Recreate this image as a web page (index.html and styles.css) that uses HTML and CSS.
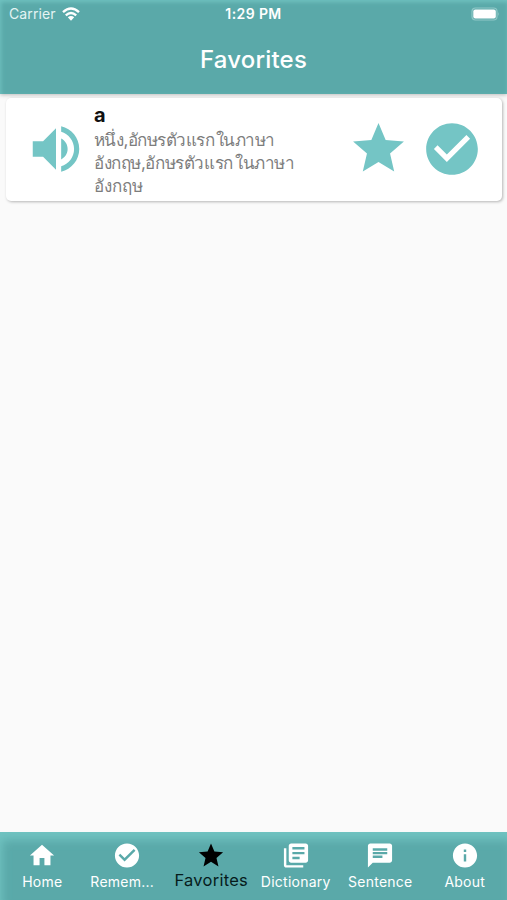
FILE: index.html
```html
<!DOCTYPE html>
<html lang="en">
<head>
  <meta charset="utf-8">
  <title>Favorites</title>
  <link rel="stylesheet" href="styles.css">
</head>
<body>
  <header class="header">
    <div class="status">
      <div class="carrier">
        <span>Carrier</span>
        <svg class="wifi" viewBox="0 0 18 14">
          <path d="M1 5.2Q9-2 17 5.2M3.8 8.3Q9 3.7 14.2 8.3" fill="none" stroke="#fff" stroke-width="2.4"/>
          <path d="M5.8 10.3Q9 7.6 12.2 10.3L9 13.7z" fill="#fff"/>
        </svg>
      </div>
      <span class="time">1:29 PM</span>
      <svg class="battery" viewBox="0 0 30 14">
        <rect x="1" y="1" width="25" height="12" rx="3.5" fill="none" stroke="#8fc8c7" stroke-width="1.2"/>
        <rect x="2.3" y="2.5" width="22.5" height="9" rx="2" fill="#fff"/>
        <path d="M27.3 5v4q1.7-2 0-4z" fill="#8fc8c7"/>
      </svg>
    </div>
    <h1 class="title">Favorites</h1>
  </header>

  <main class="content">
    <div class="card">
      <svg class="sound" viewBox="0 0 24 24"><path d="M3 9v6h4l5 5V4L7 9H3zm13.5 3c0-1.77-1.02-3.29-2.5-4.03v8.05c1.48-.73 2.5-2.25 2.5-4.02zM14 3.23v2.06c2.89.86 5 3.54 5 6.71s-2.11 5.85-5 6.71v2.06c4.01-.91 7-4.49 7-8.77s-2.99-7.86-7-8.77z"/></svg>
      <div class="word">
        <h2>a</h2>
        <p lang="th"><span class="first">หนึ่ง,อักษรตัวแรก<span class="gap">ในภาษา</span></span><br><span class="second">อังกฤษ,อักษรตัวแรก<span class="gap">ในภาษา</span></span><br><span>อังกฤษ</span></p>
      </div>
      <svg class="star" viewBox="0 0 24 24"><path d="M12 17.27L18.18 21l-1.64-7.03L22 9.24l-7.19-.61L12 2 9.19 8.63 2 9.24l5.46 4.73L5.82 21z"/></svg>
      <svg class="check" viewBox="0 0 24 24"><path d="M12 2C6.48 2 2 6.48 2 12s4.48 10 10 10 10-4.48 10-10S17.52 2 12 2zm-2 15l-5-5 1.41-1.41L10 14.17l7.59-7.59L19 8l-9 9z"/></svg>
    </div>
  </main>

  <nav class="tabs">
    <div class="tab">
      <svg viewBox="0 0 24 24"><path d="M10 20v-6h4v6h5v-8h3L12 3 2 12h3v8z"/></svg>
      <span>Home</span>
    </div>
    <div class="tab">
      <svg viewBox="0 0 24 24"><path d="M12 2C6.48 2 2 6.48 2 12s4.48 10 10 10 10-4.48 10-10S17.52 2 12 2zm-2 15l-5-5 1.41-1.41L10 14.17l7.59-7.59L19 8l-9 9z"/></svg>
      <span class="cut">Remem...</span>
    </div>
    <div class="tab active">
      <svg viewBox="0 0 24 24"><path d="M12 17.27L18.18 21l-1.64-7.03L22 9.24l-7.19-.61L12 2 9.19 8.63 2 9.24l5.46 4.73L5.82 21z"/></svg>
      <span>Favorites</span>
    </div>
    <div class="tab">
      <svg viewBox="0 0 24 24"><path d="M4 6H2v14c0 1.1.9 2 2 2h14v-2H4V6zm16-4H8c-1.1 0-2 .9-2 2v12c0 1.1.9 2 2 2h12c1.1 0 2-.9 2-2V4c0-1.1-.9-2-2-2zm-1 9H9V9h10v2zm-4 4H9v-2h6v2zm4-8H9V5h10v2z"/></svg>
      <span>Dictionary</span>
    </div>
    <div class="tab">
      <svg viewBox="0 0 24 24"><path d="M20 2H4c-1.1 0-1.99.9-1.99 2L2 22l4-4h14c1.1 0 2-.9 2-2V4c0-1.1-.9-2-2-2zM6 9h12v2H6V9zm8 5H6v-2h8v2zm4-6H6V6h12v2z"/></svg>
      <span>Sentence</span>
    </div>
    <div class="tab">
      <svg viewBox="0 0 24 24"><path d="M12 2C6.48 2 2 6.48 2 12s4.48 10 10 10 10-4.48 10-10S17.52 2 12 2zm1 15h-2v-6h2v6zm0-8h-2V7h2v2z"/></svg>
      <span>About</span>
    </div>
  </nav>
</body>
</html>
```
FILE: styles.css
```css
* { box-sizing: border-box; }
body {
  margin: 0;
  height: 900px;
  display: flex;
  flex-direction: column;
  overflow: hidden;
  background: #fafafa;
  font-family: Inter, "Liberation Sans", sans-serif;
}
h1, h2, p { margin: 0; }
svg { display: block; flex: none; }

.header {
  height: 94px;
  background: #5aa9a9;
  color: white;
  box-shadow: inset 1px 2px 4px #70c3c1, 0 1px 4px rgba(0, 0, 0, 0.25);
}
.status {
  height: 27px;
  padding: 0 6px 0 9px;
  display: grid;
  grid-template-columns: 1fr auto 1fr;
  align-items: center;
  font-size: 14px;
}
.carrier { display: flex; align-items: center; gap: 6px; color: #e4f4f3; letter-spacing: 0.1px; }
.wifi { width: 18px; height: 14px; }
.time { padding-right: 3px; font-size: 14px; font-weight: 600; letter-spacing: 0.4px; }
.battery { width: 30px; height: 14px; justify-self: end; }
.title {
  padding-top: 17px;
  line-height: 32px;
  text-align: center;
  font-size: 24px;
  font-weight: 500;
  letter-spacing: 0.2px;
}

.content { flex: 1; padding: 4px 5px 0 6px; }
.card {
  height: 103px;
  padding-left: 19px;
  display: flex;
  align-items: center;
  background: white;
  border-radius: 5px;
  box-shadow: 1px 1px 3px rgba(0, 0, 0, 0.28);
}
.card svg { margin-top: -2px; fill: #74c5c5; }
.sound { width: 62px; height: 62px; }
.word { width: 260px; height: 103px; margin-left: 1px; padding: 5px 0 0 6px; }
.word h2 { line-height: 25px; font-size: 20px; font-weight: 700; color: #111; }
.word p { padding-top: 1px; line-height: 23px; font-size: 17px; color: #7d7d7d; white-space: nowrap; }
.first { letter-spacing: -0.53px; }
.second { letter-spacing: -0.4px; }
.gap { margin-left: 2px; }
.star { width: 61px; height: 61px; }
.check { width: 62px; height: 62px; margin-left: 12px; }

.tabs {
  height: 68px;
  padding-top: 9px;
  display: grid;
  grid-template-columns: repeat(6, 1fr);
  background: #5aa9a9;
  box-shadow: inset 3px 9px 10px -1px #70c3c1;
}
.tab {
  display: flex;
  flex-direction: column;
  align-items: center;
  color: white;
  font-size: 14px;
  line-height: 24px;
  letter-spacing: 0.25px;
}
.tab svg { width: 30px; height: 29px; fill: currentColor; }
.cut { margin-left: -9px; }
.tab.active { color: #061c1c; font-size: 16.5px; line-height: 21px; }
.tab.active svg { fill: black; }
```
